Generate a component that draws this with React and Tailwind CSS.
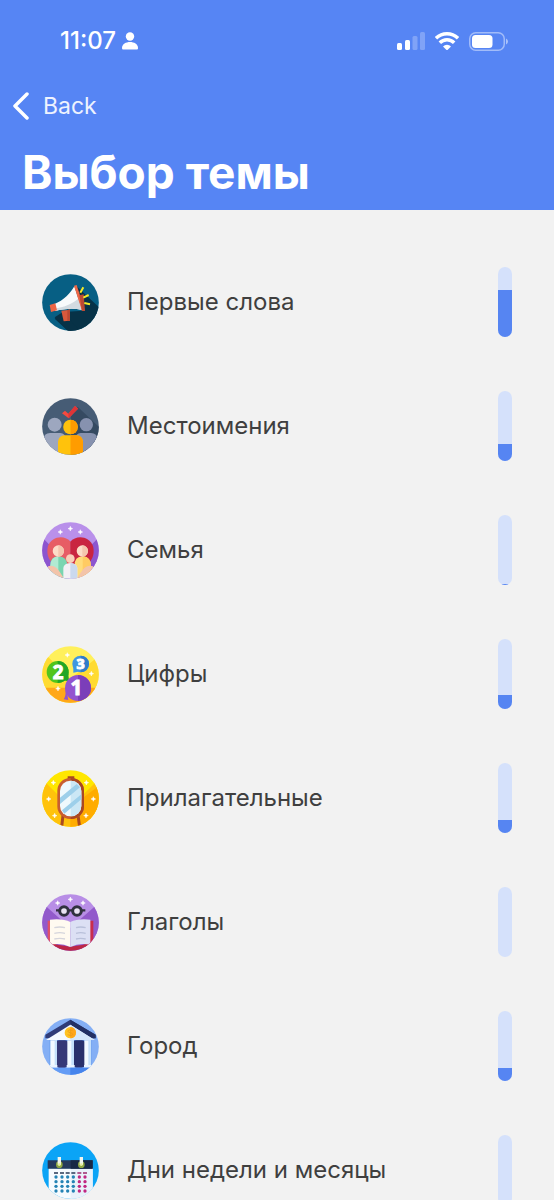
import { useId } from 'react'

// Every topic icon is drawn on the same round 171x171 canvas.
const RoundIcon = ({ background, children }) => {
  const id = useId()

  return (
    <svg viewBox="0 0 171 171" className="h-[57px] w-[57px] shrink-0" aria-hidden="true">
      <clipPath id={id}>
        <circle cx="85.5" cy="85.5" r="85" />
      </clipPath>
      <g clipPath={`url(#${id})`}>
        <rect width="171" height="171" fill={background} />
        {children}
      </g>
    </svg>
  )
}

const Sparkle = ({ x, y }) => (
  <path
    d={`M${x} ${y - 7}l2 5 5 2-5 2-2 5-2-5-5-2 5-2z`}
    fill="#fff"
    stroke="#fff"
    strokeWidth="1.5"
    strokeLinejoin="round"
  />
)

const MegaphoneIcon = () => (
  <RoundIcon background="#075f84">
    <path d="M103 36 171 100v71H78L38 134l25-20 62-4z" fill="#073247" />
    <path d="m38 130 40 41h35l-30-35-20-22z" fill="#073247" />
    <path d="m58 110 22-2 4 32-19 2z" fill="#d9593c" />
    <path d="m76 108 8-2v34l-8 1z" fill="#bd4933" />
    <path d="M36 91C66 79 86 57 97 37l23 71c-28-7-54-3-81 3z" fill="#f8fafb" />
    <path d="M38 103c27-3 50-12 71-29l11 34c-28-7-54-3-81 3z" fill="#d3dbe1" />
    <path d="m23 93 17-5 5 21-18 5z" fill="#ed6545" />
    <path d="m96 35 8-2 25 77-9 1z" fill="#ee6847" />
    <path d="m112 64 13-3 4 49-9 1z" fill="#bd4933" />
    <g stroke="#f5e928" strokeWidth="6">
      <path d="m115 56 9-16M124 71l16-8M127 87l17 4" />
    </g>
  </RoundIcon>
)

const PeopleIcon = () => (
  <RoundIcon background="#465c75">
    <path d="m107 26 64 61v84H87V55z" fill="#354a61" />
    <circle cx="38" cy="80" r="21" fill="#9da7bf" />
    <circle cx="133" cy="80" r="20" fill="#8792af" />
    <path d="M6 171v-50q0-15 18-16h31q14 1 16 16v50z" fill="#9da7bf" />
    <path d="M100 171v-50q2-15 16-16h31q18 1 18 16v50z" fill="#8792af" />
    <path d="M48 171v-40q2-18 20-19h35q18 1 20 19v40z" fill="#ffc20c" />
    <path d="M85.500 112H103q18 1 20 19v40H85.500z" fill="#ff9c00" />
    <circle cx="85.500" cy="87" r="22" fill="#ffc20c" />
    <path d="M85.500 65a22 22 0 0 1 0 44z" fill="#ff9c00" />
    <path d="m60 46 9-8 10 9 20-23 9 8-28 29z" fill="#f64a3f" />
    <path d="m79 47 20-23 9 8-28 29z" fill="#df3437" />
  </RoundIcon>
)

const FamilyIcon = () => (
  <RoundIcon background="#b990ea">
    <path d="M0 46 85 131 171 46v125H0z" fill="#8c55cf" />
    <path d="M86 59C69 38 29 41 18 72c-8 34 7 58 68 90z" fill="#e75d65" />
    <path d="M85 59c17-21 57-18 68 13 8 34-7 58-68 90z" fill="#c92440" />
    <path d="M25 132q-1-28 24-29 27 0 27 30v38H25z" fill="#7ad5b1" />
    <path d="M25 171v-41q2-25 24-27v68z" fill="#b1ead2" />
    <path d="M97 133q0-30 25-30 25 1 25 30v38H97z" fill="#ffdc7c" />
    <path d="M122 103q25 1 25 30v38h-25z" fill="#ffcb63" />
    <path d="M18 133q22-7 36 18l13 20H18zM153 133q-22-7-36 18l-13 20h49z" fill="#f3c4aa" />
    <circle cx="49" cy="87" r="17" fill="#fcdcc8" />
    <path d="M49 70a17 17 0 0 1 0 34z" fill="#f5c5ad" />
    <circle cx="121" cy="87" r="17" fill="#fcdcc8" />
    <path d="M121 70a17 17 0 0 1 0 34z" fill="#f5c5ad" />
    <path d="M64 171v-33q1-14 21-15 20 1 21 15v33z" fill="#f2f0f5" />
    <path d="M85 123q20 1 21 15v33H85z" fill="#cbd9ee" />
    <circle cx="85" cy="110" r="13" fill="#f9cfba" />
    <Sparkle x={55} y={30} />
    <Sparkle x={85} y={20} />
    <Sparkle x={115} y={30} />
  </RoundIcon>
)

const NumbersIcon = () => (
  <RoundIcon background="#fff05b">
    <path d="M0 15 85 98 171 30v141H0z" fill="#ffdb32" />
    <path d="M0 125h171v46H0z" fill="#ffa719" />
    <circle cx="116" cy="54" r="25" fill="#3f97df" />
    <path d="M116 29a25 25 0 0 1 0 50z" fill="#2f7cc9" />
    <path d="M94 62v18l14-3z" fill="#3f97df" />
    <circle cx="47" cy="78" r="33" fill="#52c51b" />
    <path d="M47 45a33 33 0 0 1 0 66z" fill="#20a626" />
    <path d="m79 84 2 22-20-3z" fill="#20a626" />
    <circle cx="108" cy="126" r="39" fill="#9353cf" />
    <path d="M108 87a39 39 0 0 1 0 78z" fill="#7b3eb9" />
    <path d="m75 140 4 22-14-2q6-8 6-25z" fill="#9353cf" />
    <g fill="#fff" stroke="#fff" strokeWidth="3" className="font-['Open_Sans',sans-serif] font-bold" textAnchor="middle">
      <text x="48" y="98" fontSize="56">2</text>
      <text x="116" y="70" fontSize="43">3</text>
      <text x="103" y="148" fontSize="62">1</text>
    </g>
    <Sparkle x={76} y={27} />
    <Sparkle x={148} y={83} />
    <Sparkle x={48} y={128} />
  </RoundIcon>
)

const MirrorIcon = () => (
  <RoundIcon background="#ffe700">
    <path d="M0 27 85.500 112 171 27v144H0z" fill="#ffc20b" />
    <path d="m85 112 86-65v124H85z" fill="#ffac00" />
    <path d="m63 136-4 35M108 136l5 35" stroke="#a94920" strokeWidth="9" />
    <path d="M77 27v-8h20v8z" fill="#a94920" />
    <rect x="46" y="24" width="80" height="123" rx="38" fill="#c85d31" />
    <path d="M86 24h2a38 38 0 0 1 38 38v47a38 38 0 0 1-38 38h-2z" fill="#aa4822" />
    <rect x="54" y="32" width="64" height="107" rx="31" fill="#eff9fd" />
    <path d="M86 32h1a31 31 0 0 1 31 31v45a31 31 0 0 1-31 31h-1z" fill="#cbe7f5" />
    <path d="m54 83 50-41 10 10-60 50zM60 121l58-48v15l-51 43z" fill="#9dcfea" />
    <Sparkle x={34} y={38} />
    <Sparkle x={133} y={38} />
    <Sparkle x={20} y={87} />
    <Sparkle x={154} y={87} />
    <Sparkle x={38} y={137} />
    <Sparkle x={132} y={137} />
  </RoundIcon>
)

const BookIcon = () => (
  <RoundIcon background="#b88ee6">
    <path d="m0 26 85 76 86-76v145H0z" fill="#925acb" />
    <path d="M17 80h25v91H17z" fill="#df5267" />
    <path d="M127 80h27v91h-27z" fill="#c92d4c" />
    <path d="m27 149 58 9 60-9v22H27z" fill="#bc2746" />
    <path d="M24 77q39-4 61 7v75q-26-13-61-7V81z" fill="#fffaf0" />
    <path d="M85 84q23-11 60-7v75q-34-6-60 7z" fill="#dce0f4" />
    <path d="M37 101q17-4 32 0M37 118q17-4 32 0M37 135q17-4 32 0" fill="none" stroke="#d5d5dc" strokeWidth="4" />
    <path d="M102 101q14-4 29 0M102 118q14-4 29 0M102 135q14-4 29 0" fill="none" stroke="#b9c0da" strokeWidth="4" />
    <path d="M42 49h16M77 49h17M113 49h17" stroke="#30313f" strokeWidth="7" />
    <circle cx="66" cy="51" r="13" fill="#e9e3f2" stroke="#30313f" strokeWidth="9" />
    <circle cx="105" cy="51" r="13" fill="#e9e3f2" stroke="#30313f" strokeWidth="9" />
    <Sparkle x={47} y={27} />
    <Sparkle x={85} y={16} />
    <Sparkle x={123} y={27} />
  </RoundIcon>
)

const BankIcon = () => (
  <RoundIcon background="#84aff5">
    <path d="M23 66h125v78H23z" fill="#6198eb" />
    <path d="M10 50 85 5l76 45v11h-16v5H26v-5H10z" fill="#303c78" />
    <path d="m85 5 76 45v11h-16v5H85z" fill="#233064" />
    <path d="m12 66 73-46 73 46z" fill="#f5faff" />
    <path d="m85 20 73 46H85z" fill="#d6e7fb" />
    <rect x="42" y="67" width="36" height="82" rx="10" fill="#353877" />
    <rect x="93" y="67" width="36" height="82" rx="10" fill="#28306c" />
    <path d="M25 67h20v74H25zM76 67h20v74H76zM127 67h20v74h-20z" fill="#f2f9ff" />
    <path d="M38 67h7v74h-7zM88 67h8v74h-8zM139 67h8v74h-8z" fill="#c4e0fb" />
    <path d="M21 141h25v8H21zM74 141h24v8H74zM126 141h25v8h-25z" fill="#eaf4ff" />
    <path d="M10 149h151v22H10z" fill="#649cf5" />
    <path d="M85 149h76v22H85z" fill="#4684ec" />
    <circle cx="85" cy="44" r="17" fill="#ffc323" />
    <path d="M85 27a17 17 0 0 1 0 34z" fill="#ffa51a" />
    <path d="M92 38q-14-5-14 2c0 6 14 2 14 9 0 5-9 4-15 1M85 33v23" fill="none" stroke="#ee9b18" strokeWidth="2.5" />
  </RoundIcon>
)

const CalendarIcon = () => (
  <RoundIcon background="#0ba4f6">
    <path d="M20 79h132v92H20z" fill="#f7fbfe" />
    <path d="M86 79h66v92H86z" fill="#e9f2fa" />
    <path d="M17 55h135v25H17z" fill="#26395c" />
    <path d="M86 55h66v25H86z" fill="#182845" />
    {[52, 118].map((x) => (
      <g key={x}>
        <circle cx={x} cy="68" r="10" fill="#8ea642" />
        <path d={`M${x - 5} 45h10v24h-10z`} fill="#f2f5ed" />
        <circle cx={x} cy="68" r="4" fill="#e7ed9c" />
      </g>
    ))}
    {[42, 60, 77, 94, 112, 129].map((x, column) => (
      <g key={x} fill={column < 4 ? '#2584b5' : '#c12782'}>
        <path d={`M${x - 6} 91h12v4h-12z`} fill={column < 4 ? '#273954' : '#9b286d'} />
        <circle cx={x} cy="105" r="5" />
        <circle cx={x} cy="119" r="5" />
        <circle cx={x} cy="133" r="5" />
        <circle cx={x} cy="147" r="5" />
      </g>
    ))}
  </RoundIcon>
)

const TOPICS = [
  { title: 'Первые слова', icon: MegaphoneIcon, progress: 67 },
  { title: 'Местоимения', icon: PeopleIcon, progress: 25 },
  { title: 'Семья', icon: FamilyIcon, progress: 2 },
  { title: 'Цифры', icon: NumbersIcon, progress: 20 },
  { title: 'Прилагательные', icon: MirrorIcon, progress: 19 },
  { title: 'Глаголы', icon: BookIcon, progress: 0 },
  { title: 'Город', icon: BankIcon, progress: 19 },
  { title: 'Дни недели и месяцы', icon: CalendarIcon, progress: 0 },
]

const StatusBar = () => (
  <div className="flex h-[82px] items-center justify-between pl-[60px] pr-[46px]">
    <div className="flex items-center gap-1.5 text-2xl font-medium">
      <span>11:07</span>
      <svg viewBox="0 0 16 18" className="h-[18px] w-4" fill="currentColor" aria-hidden="true">
        <circle cx="8" cy="4.500" r="4.200" />
        <path d="M0 16c0-8 16-8 16 0 0 1-.5 1.500-1.500 1.500h-13C.5 17.500 0 17 0 16Z" />
      </svg>
    </div>
    <div className="flex items-center gap-2.5">
      <svg viewBox="0 0 28 18" className="h-[18px] w-7" fill="currentColor" aria-hidden="true">
        <rect x="0" y="11" width="5" height="7" rx="1.500" />
        <rect x="8" y="8" width="5" height="10" rx="1.500" />
        <rect x="15.500" y="4" width="5" height="14" rx="1.500" opacity=".25" />
        <rect x="23" y="0" width="5" height="18" rx="1.500" opacity=".25" />
      </svg>
      <svg viewBox="0 0 24 18" className="h-[18px] w-6" fill="none" stroke="currentColor" strokeWidth="3.4" aria-hidden="true">
        <path d="M1 6.200a16 16 0 0 1 22 0M4.800 10.800a10 10 0 0 1 14.400 0" />
        <path d="M8 14.400a5.500 5.500 0 0 1 8 0L12 18.500Z" fill="currentColor" stroke="none" />
      </svg>
      <svg viewBox="0 0 39 19" className="h-[19px] w-[39px]" aria-hidden="true">
        <rect x=".75" y=".75" width="34.500" height="17.500" rx="6" fill="none" stroke="currentColor" strokeWidth="1.500" opacity=".45" />
        <rect x="3" y="3" width="20.500" height="13" rx="3.500" fill="currentColor" />
        <path d="M37 6.500q2 1 2 3t-2 3z" fill="currentColor" opacity=".5" />
      </svg>
    </div>
  </div>
)

const ProgressBar = ({ label, value }) => (
  <div
    role="progressbar"
    aria-label={label}
    aria-valuenow={value}
    aria-valuemin={0}
    aria-valuemax={100}
    className="flex h-[70px] w-3.5 shrink-0 flex-col justify-end overflow-hidden rounded-full bg-[#d5e1fb]"
  >
    <div className="bg-[#5685f2]" style={{ height: `${value}%` }} />
  </div>
)

const TopicRow = ({ topic }) => {
  const Icon = topic.icon

  return (
    <li>
      <button type="button" className="flex h-[124px] w-full items-center px-[42px] text-left">
        <Icon />
        <span className="ml-7 min-w-0 flex-1 truncate text-2xl leading-8">{topic.title}</span>
        <ProgressBar label={topic.title} value={topic.progress} />
      </button>
    </li>
  )
}

const App = () => (
  <div className="flex h-screen flex-col bg-[#f2f2f2] font-[Inter,'Liberation_Sans',sans-serif] text-[#3f3f3f]">
    <header className="shrink-0 bg-[#5685f4] pb-2 text-white">
      <StatusBar />
      <button type="button" className="flex h-12 items-center gap-3.5 pl-3 text-[23px] text-white/90">
        <svg viewBox="0 0 17 28" className="h-7 w-[17px]" fill="none" stroke="#fff" strokeWidth="3.500" strokeLinecap="round" strokeLinejoin="round" aria-hidden="true">
          <path d="M15 2 3 14l12 12" />
        </svg>
        Back
      </button>
      <h1 className="mt-3 px-[22px] text-[46px] leading-[60px] font-bold">Выбор темы</h1>
    </header>
    <main className="min-h-0 flex-1 overflow-y-auto pt-[30px] [scrollbar-width:none]">
      <ul>
        {TOPICS.map((topic) => (
          <TopicRow key={topic.title} topic={topic} />
        ))}
      </ul>
    </main>
  </div>
)

export default App
